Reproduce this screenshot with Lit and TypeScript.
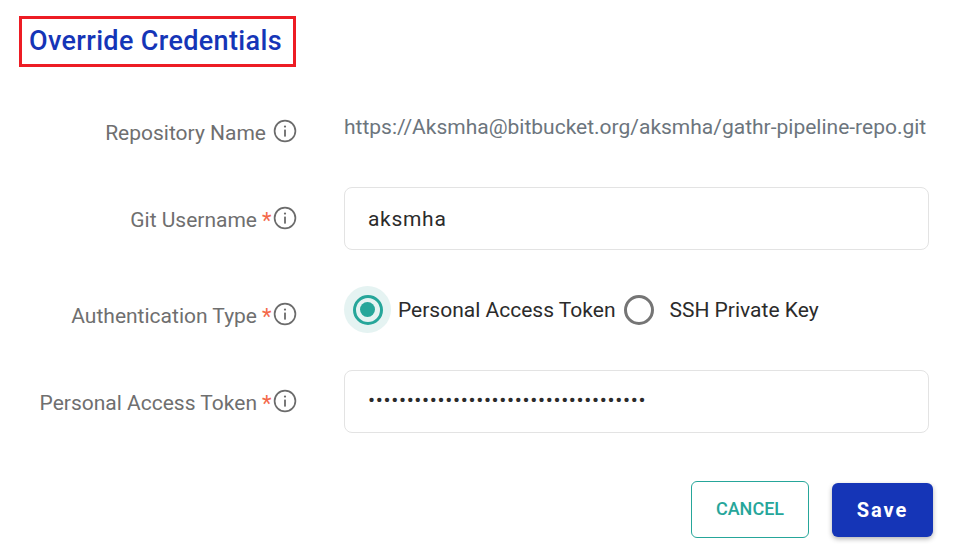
import { LitElement, html, css } from "lit";
import { customElement } from "lit/decorators.js";

const info = html`<svg class="info" viewBox="0 0 24 24" width="24" height="24" fill="none">
  <circle cx="12" cy="12" r="10.4" stroke="#6b6b6b" stroke-width="1.7"></circle>
  <circle cx="12" cy="7.6" r="1.1" fill="#6b6b6b"></circle>
  <rect x="11.1" y="10.6" width="1.8" height="7" fill="#6b6b6b"></rect>
</svg>`;

@customElement("app-root")
export class AppRoot extends LitElement {
  static styles = css`
    :host {
      display: block;
      width: 955px;
      height: 546px;
      background: #fff;
      font-family: Roboto, "Liberation Sans", sans-serif;
      overflow: hidden;
    }
    .page {
      display: flex;
      flex-direction: column;
      padding: 16px 26px 0 19px;
      box-sizing: border-box;
      height: 546px;
    }
    .title {
      align-self: flex-start;
      box-sizing: border-box;
      width: 277px;
      height: 51px;
      border: 3px solid #ed1c24;
      padding-left: 7px;
      margin: 0;
      font-size: 27px;
      line-height: 45px;
      font-weight: 500;
      letter-spacing: 0.35px;
      color: #1535b7;
      white-space: nowrap;
    }
    .row {
      display: grid;
      grid-template-columns: 278px 1fr;
      column-gap: 47px;
    }
    .label {
      display: flex;
      justify-content: flex-end;
      align-items: center;
      font-size: 21px;
      color: #6f6f6f;
      white-space: nowrap;
    }
    .req {
      color: #f4694a;
      margin-left: 5px;
      margin-right: 1.5px;
      font-size: 22px;
    }
    .info {
      flex: none;
      margin-bottom: 4px;
    }
    .r1 .info { margin-left: 7px; }
    .r1 { margin-top: 47px; height: 36px; }
    .r1 .label { padding-top: 2px; }
    .r2 { margin-top: 37px; height: 63px; }
    .r3 { margin-top: 36px; height: 47px; }
    .r4 { margin-top: 37px; height: 63px; }
    .url {
      font-size: 21px;
      color: #6c757d;
      line-height: 28px;
      white-space: nowrap;
      align-self: center;
      margin-top: -11px;
    }
    .r2 .label { padding-top: 3px; }
    .r3 .label { padding-top: 13px; }
    .r4 .label { padding-top: 3px; }
    .field {
      box-sizing: border-box;
      height: 63px;
      border: 1px solid #e3e3e3;
      border-radius: 8px;
      padding: 0 23px;
      display: flex;
      align-items: center;
      font-size: 21px;
      letter-spacing: 0.7px;
      color: #2b2b2b;
      white-space: nowrap;
    }
    .field.pw {
      padding-bottom: 3px;
      letter-spacing: 0.64px;
    }
    .radios {
      display: flex;
      align-items: center;
      font-size: 21px;
      color: #2b2b2b;
      white-space: nowrap;
    }
    .halo {
      width: 47px;
      height: 47px;
      border-radius: 50%;
      background: #e5f3f2;
      display: flex;
      align-items: center;
      justify-content: center;
      margin-right: 7px;
      flex: none;
    }
    .dot {
      box-sizing: border-box;
      width: 30px;
      height: 30px;
      border-radius: 50%;
      border: 3px solid #26a69a;
      display: flex;
      align-items: center;
      justify-content: center;
    }
    .dot::after {
      content: "";
      width: 15px;
      height: 15px;
      border-radius: 50%;
      background: #26a69a;
    }
    .off {
      box-sizing: border-box;
      width: 30px;
      height: 30px;
      border-radius: 50%;
      border: 3px solid #757575;
      margin: 0 15px 0 9px;
      flex: none;
    }
    .actions {
      display: flex;
      justify-content: flex-end;
      align-items: center;
      gap: 23px;
      margin-top: 48px;
      margin-right: -4px;
    }
    .cancel {
      box-sizing: border-box;
      width: 118px;
      height: 57px;
      border: 1px solid #26a69a;
      border-radius: 6px;
      background: #fff;
      color: #26a69a;
      font: 500 18px Roboto, sans-serif;
      padding: 0 0 2px;
    }
    .save {
      box-sizing: border-box;
      width: 101px;
      height: 54px;
      border: 0;
      border-radius: 6px;
      background: #1535b7;
      color: #fff;
      font: 700 20px Roboto, sans-serif;
      letter-spacing: 2px;
      box-shadow: 0 2px 5px rgba(0, 0, 0, 0.3);
    }
  `;

  render() {
    return html`<div class="page">
      <h1 class="title">Override Credentials</h1>
      <div class="row r1">
        <div class="label">Repository Name${info}</div>
        <div class="url">https://Aksmha@bitbucket.org/aksmha/gathr-pipeline-repo.git</div>
      </div>
      <div class="row r2">
        <div class="label">Git Username<span class="req">*</span>${info}</div>
        <div class="field">aksmha</div>
      </div>
      <div class="row r3">
        <div class="label">Authentication Type<span class="req">*</span>${info}</div>
        <div class="radios">
          <span class="halo"><span class="dot"></span></span>
          <span>Personal Access Token</span>
          <span class="off"></span>
          <span>SSH Private Key</span>
        </div>
      </div>
      <div class="row r4">
        <div class="label">Personal Access Token<span class="req">*</span>${info}</div>
        <div class="field pw">${"•".repeat(36)}</div>
      </div>
      <div class="actions">
        <button class="cancel">CANCEL</button>
        <button class="save">Save</button>
      </div>
    </div>`;
  }
}
